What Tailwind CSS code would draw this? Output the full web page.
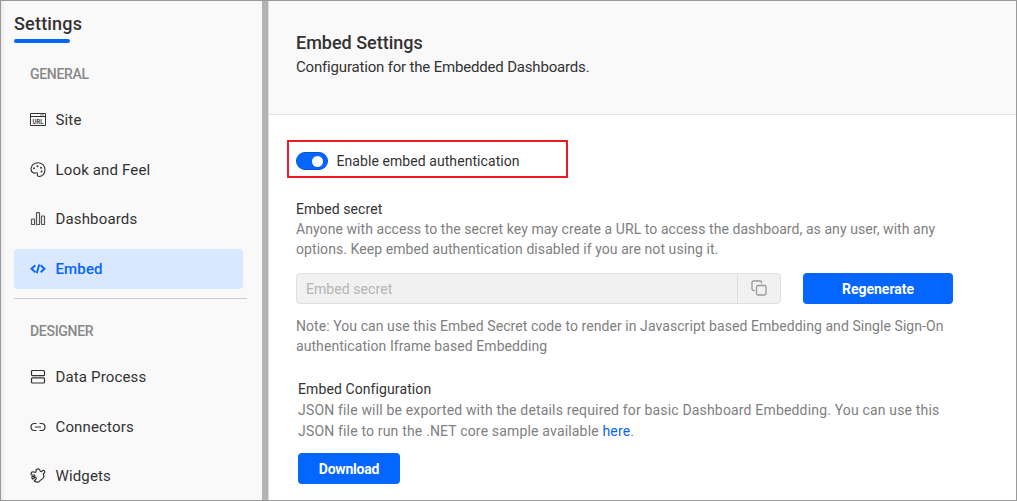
<!DOCTYPE html>
<html lang="en">
<head>
<meta charset="utf-8">
<title>Embed Settings</title>
<script src="https://cdn.jsdelivr.net/npm/@tailwindcss/browser@4"></script>
</head>
<body class="w-[1017px] h-[501px] overflow-hidden bg-white font-['Roboto',sans-serif] text-[#333] whitespace-nowrap">
<div class="flex w-full h-[501px] border border-[#999]">
  <aside class="w-[261px] shrink-0 bg-[#f9f9f9] pl-[13px] pt-3 shadow-[inset_4px_0_4px_-3px_#e4e4e4]">
    <h1 class="text-[18px] leading-[22px] font-medium tracking-[0.2px]">Settings</h1>
    <div class="mt-1 w-14 h-1 rounded-full bg-[#0565ff]"></div>
    <h2 class="mt-[21px] ml-4 text-[14px] leading-5 font-medium text-[#888] tracking-[-0.3px]">GENERAL</h2>
    <nav class="mt-4 w-[229px] text-[15px] tracking-[0.15px]">
      <a class="flex items-center h-10 pl-4 gap-[9.5px]">
        <svg class="size-4" viewBox="0 0 16 16" fill="none" stroke="#333"><path d="M.5 1.500h15v12H.5zM1 4.500h14"/><path d="M10 3h4" stroke="#777"/><text x="8" y="11.800" text-anchor="middle" font-size="6.500" font-weight="700" fill="#444" stroke="none" textLength="11" lengthAdjust="spacingAndGlyphs">URL</text></svg>
        <span>Site</span></a>
      <a class="mt-[10px] flex items-center h-10 pl-4 gap-[9.5px]">
        <svg class="size-4" viewBox="0 0 16 16" fill="none" stroke="#333" stroke-width="1.100"><path d="M1 6.800C1.300 3.300 4.300.7 8 .7s7 3 7 7c0 4-2.800 6.800-5.800 6.800-1.500 0-2.200-.8-1.800-1.800.4-1.300 0-2.200-1.200-1.900-1 .3-1.600.5-2.600.1C1.900 10.300.9 8.800 1 6.800Z"/><g fill="#333" stroke="none"><circle cx="4" cy="6.300" r="1"/><circle cx="7.500" cy="4.200" r="1"/><circle cx="11" cy="5.700" r="1"/><circle cx="11.500" cy="9.500" r="1"/></g></svg>
        <span>Look and Feel</span></a>
      <a class="mt-[9px] flex items-center h-10 pl-4 gap-[9.5px]">
        <svg class="size-4" viewBox="0 0 16 16" fill="none" stroke="#555" stroke-width="1.200"><rect x="1.500" y="8" width="3" height="5.500" rx=".6"/><rect x="6.500" y="1.700" width="3" height="11.800" rx=".6"/><rect x="11.500" y="5" width="3" height="8.500" rx=".6"/></svg>
        <span>Dashboards</span></a>
      <a class="mt-[10px] flex items-center h-10 pl-4 gap-[9.5px] rounded bg-[#dae8ff] text-[#0565ff] font-medium">
        <svg class="size-4" viewBox="0 0 16 16" fill="none" stroke="#0565ff" stroke-width="1.900"><path d="M5.300 4.300 1.500 7.800l3.800 3.400M10.700 4.300l3.800 3.500-3.800 3.400M9.300 3.400 6.700 12.200"/></svg>
        <span>Embed</span></a>
    </nav>
    <div class="mt-[9px] w-[233px] h-px bg-[#ccc]"></div>
    <h2 class="mt-[22px] ml-4 text-[14px] leading-5 font-medium text-[#888] tracking-[-0.3px]">DESIGNER</h2>
    <nav class="mt-4 w-[229px] text-[15px] tracking-[0.15px]">
      <a class="flex items-center h-10 pl-4 gap-[9.5px]">
        <svg class="size-4" viewBox="0 0 16 16" fill="none" stroke="#333" stroke-width="1.200"><rect x="1.500" y="1.500" width="13" height="5.200" rx="1"/><rect x="1.500" y="8.800" width="13" height="5.200" rx="1"/></svg>
        <span>Data Process</span></a>
      <a class="mt-[10px] flex items-center h-10 pl-4 gap-[9.5px]">
        <svg class="size-4" viewBox="0 0 16 16" fill="none" stroke="#333" stroke-width="1.200"><path d="M6.500 4.500h-2a3.500 3.500 0 0 0 0 7h2M9.500 4.500h2a3.500 3.500 0 0 1 0 7h-2M5 8h6"/></svg>
        <span>Connectors</span></a>
      <a class="mt-[9px] flex items-center h-10 pl-4 gap-[9.5px]">
        <svg class="size-4" viewBox="0 0 16 16" fill="none" stroke="#333" stroke-width="1.200" stroke-linejoin="round"><path d="M6 3.700C5.600 1.700 7.300.6 8.800 1.100c1.400.5 1 1.700 1.700 2.300.6.500 1.300.1 1.800-.5.900-1 2.600-.3 2.500 1.100-.1 1.200-1.300 1.200-1.500 2-.1.700.6 1.200.6 2.300 0 1.500-.8 2.500-2 2.900-.9.300-1.300.6-1.700 1.300-.6 1.100-1.700 1.700-3.200 1.600-1.100 0-2-.6-2.800-1.300l1.800-1.600c.9-1-.4-2.400-1.500-1.500l-1.700 1.400C1.900 10.300 1.500 9.200 2 8.500l2.200.2c.9 0 .9-1.400 0-1.500L1.400 7C.6 5.600 1.200 4.100 2.600 3.800c1.100-.3 1.500.5 2.300.5.500 0 .9-.2 1.100-.6Z"/></svg>
        <span>Widgets</span></a>
    </nav>
  </aside>
  <div class="w-[7px] shrink-0 bg-[#b3b3b3] border-r border-[#ddd]"></div>
  <main class="grow">
    <header class="h-[114px] bg-[#f9f9f9] border-b border-[#e4e4e4] pl-[27px] pt-[30px]">
      <h2 class="text-[18px] leading-6 font-medium">Embed Settings</h2>
      <p class="text-[15px] leading-6 tracking-[-0.18px]">Configuration for the Embedded Dashboards.</p>
    </header>
    <section class="pl-[27px] pt-[25px] text-[14px] leading-5 tracking-[0.07px]">
      <div class="-ml-[9px] w-[281px] h-[38px] border-2 border-[#ed1c24] pl-[7px] pt-1 flex items-center">
        <div class="w-8 h-[18px] rounded-full bg-[#0565ff] border border-[#0755cf] flex items-center justify-end pr-1"><div class="size-[11px] rounded-full bg-white"></div></div>
        <span class="ml-[8.500px]">Enable embed authentication</span>
      </div>
      <h3 class="mt-[21px]">Embed secret</h3>
      <p class="text-[#808080]">Anyone with access to the secret key may create a URL to access the dashboard, as any user, with any<br>options. Keep embed authentication disabled if you are not using it.</p>
      <div class="mt-[14px] flex">
        <div class="w-[485px] h-[31px] rounded border border-[#e0e0e0] bg-[#f1f1f1] flex">
          <div class="w-[441px] pl-[9px] leading-[30px] text-[#b5b5b5] border-r border-[#e0e0e0]">Embed secret</div>
          <div class="grow flex items-center justify-center"><svg class="size-4 -mt-[2px]" viewBox="0 0 16 16" fill="none" stroke="#999" stroke-width="1.300"><rect x="5.500" y="5.500" width="9.500" height="9.500" rx="1.500"/><path d="M3.500 10.500H2.500A1.500 1.500 0 0 1 1 9V2.500A1.500 1.500 0 0 1 2.500 1H9a1.500 1.500 0 0 1 1.500 1.500v1"/></svg></div>
        </div>
        <button class="ml-[22px] w-[150px] h-[31px] rounded bg-[#0565ff] text-white font-bold tracking-normal">Regenerate</button>
      </div>
      <p class="mt-3 text-[#808080]">Note: You can use this Embed Secret code to render in Javascript based Embedding and Single Sign-On<br>authentication Iframe based Embedding</p>
      <div class="mt-[23px] pl-[2px]">
        <h3 class="tracking-[0.1px]">Embed Configuration</h3>
        <p class="mt-px leading-[21px] tracking-[0.17px] text-[#808080]">JSON file will be exported with the details required for basic Dashboard Embedding. You can use this<br>JSON file to run the .NET core sample available <a class="text-[#0565ff]">here</a>.</p>
        <button class="mt-[11px] w-[102px] h-[31px] rounded bg-[#0565ff] text-white font-bold tracking-[-0.2px]">Download</button>
      </div>
    </section>
  </main>
</div>
</body>
</html>
